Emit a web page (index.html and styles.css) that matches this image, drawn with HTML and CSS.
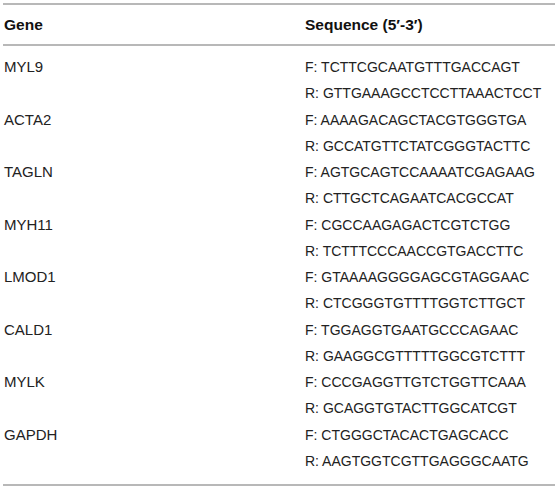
FILE: index.html
```html
<!DOCTYPE html>
<html>
<head>
<meta charset="utf-8">
<link rel="stylesheet" href="styles.css">
</head>
<body>
<div class="table">
  <div class="head">
    <div class="c1">Gene</div>
    <div class="c2">Sequence (5′-3′)</div>
  </div>
  <div class="body">
    <div class="row"><div class="c1">MYL9</div><div class="c2"><div>F: TCTTCGCAATGTTTGACCAGT</div><div>R: GTTGAAAGCCTCCTTAAACTCCT</div></div></div>
    <div class="row"><div class="c1">ACTA2</div><div class="c2"><div>F: AAAAGACAGCTACGTGGGTGA</div><div>R: GCCATGTTCTATCGGGTACTTC</div></div></div>
    <div class="row"><div class="c1">TAGLN</div><div class="c2"><div>F: AGTGCAGTCCAAAATCGAGAAG</div><div>R: CTTGCTCAGAATCACGCCAT</div></div></div>
    <div class="row"><div class="c1">MYH11</div><div class="c2"><div>F: CGCCAAGAGACTCGTCTGG</div><div>R: TCTTTCCCAACCGTGACCTTC</div></div></div>
    <div class="row"><div class="c1">LMOD1</div><div class="c2"><div>F: GTAAAAGGGGAGCGTAGGAAC</div><div>R: CTCGGGTGTTTTGGTCTTGCT</div></div></div>
    <div class="row"><div class="c1">CALD1</div><div class="c2"><div>F: TGGAGGTGAATGCCCAGAAC</div><div>R: GAAGGCGTTTTTGGCGTCTTT</div></div></div>
    <div class="row"><div class="c1">MYLK</div><div class="c2"><div>F: CCCGAGGTTGTCTGGTTCAAA</div><div>R: GCAGGTGTACTTGGCATCGT</div></div></div>
    <div class="row"><div class="c1">GAPDH</div><div class="c2"><div>F: CTGGGCTACACTGAGCACC</div><div>R: AAGTGGTCGTTGAGGGCAATG</div></div></div>
  </div>
</div>
</body>
</html>
```
FILE: styles.css
```css
html, body {
  margin: 0;
  padding: 0;
  background: #fff;
}
body {
  font-family: "Liberation Sans", Arial, sans-serif;
  font-size: 14px;
  color: #222;
}
.table {
  margin: 3px 0 0 3px;
  width: 552px;
  border-top: 2px solid #b8b8b8;
  border-bottom: 2px solid #b8b8b8;
}
.head {
  display: grid;
  grid-template-columns: 302px 1fr;
  padding: 12px 0 11px;
  line-height: 16px;
  font-size: 15.5px;
  font-weight: bold;
  color: #111;
  border-bottom: 2px solid #b8b8b8;
}
.c1 {
  padding-left: 1px;
}
.body {
  padding: 8px 0 10px;
}
.row {
  display: grid;
  grid-template-columns: 302px 1fr;
  line-height: 26.25px;
}
.row .c1 {
  font-size: 15px;
}
```
